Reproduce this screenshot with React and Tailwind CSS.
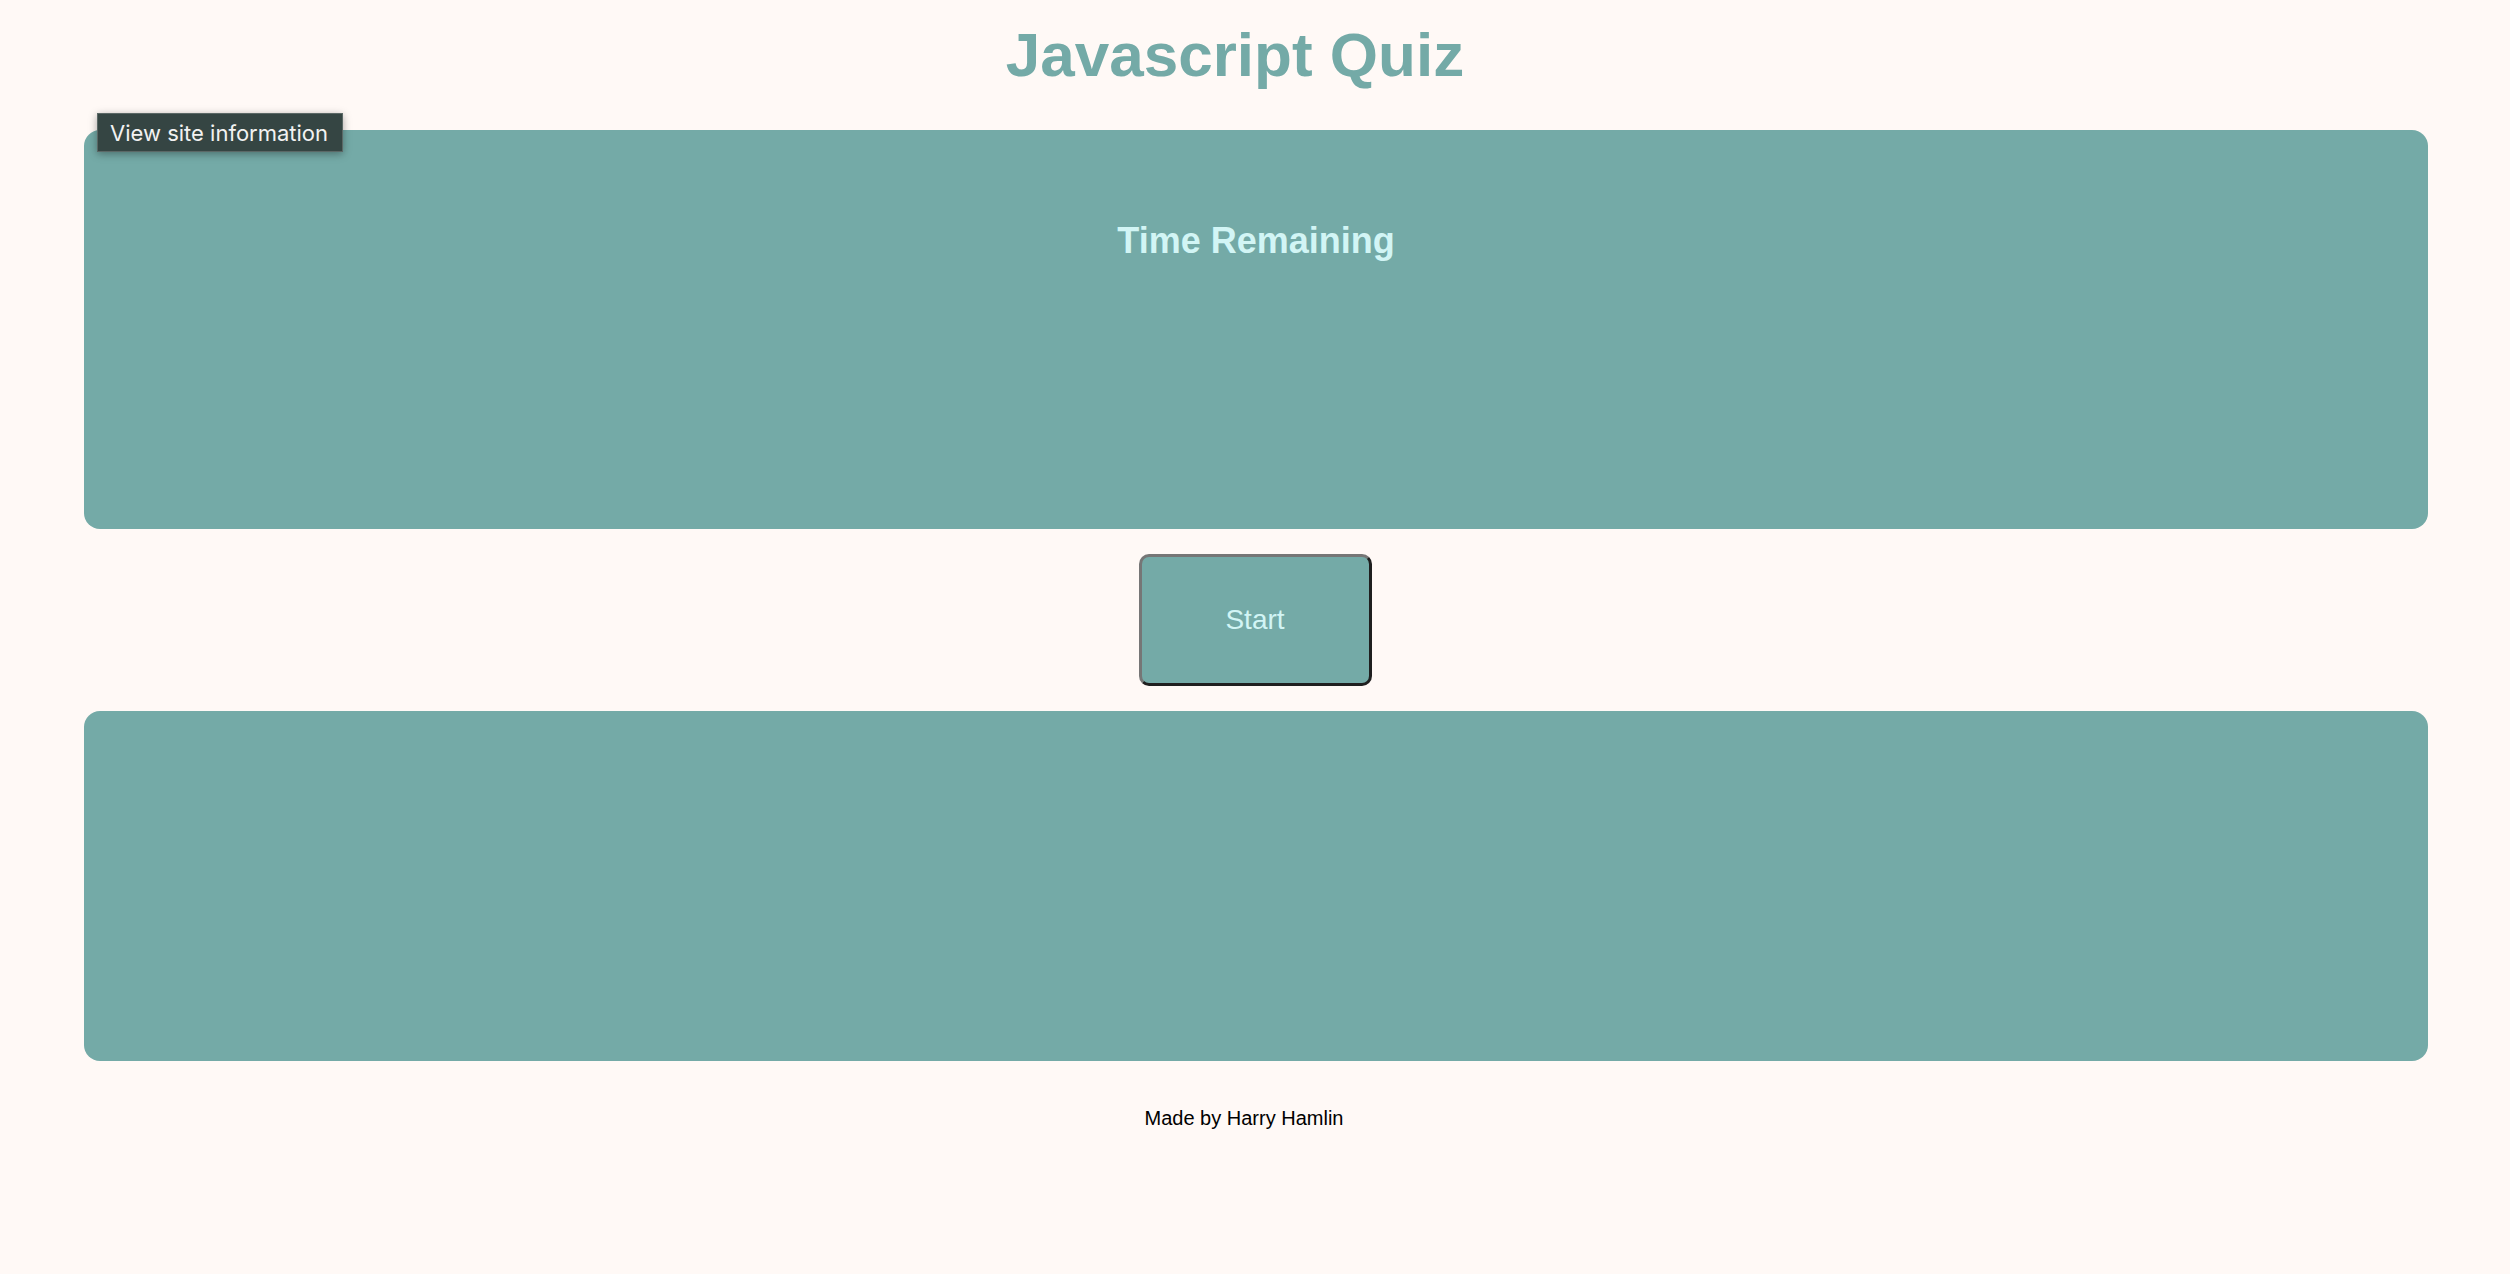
import React from "react";

export default function App() {
  return (
    <div
      className="relative min-h-screen w-full bg-[#fff9f6] pt-[19px] pb-[120px]"
      style={{ fontFamily: '"Liberation Sans", Arial, sans-serif' }}
    >
      <h1 className="h-[72px] pr-[40px] text-center text-[62px] font-bold leading-[72px] text-[#74aaa7]">
        Javascript Quiz
      </h1>

      <section className="mt-[39px] ml-[84px] mr-[82px] h-[399px] rounded-[16px] bg-[#74aaa7] pt-[89px]">
        <h2 className="text-center text-[36px] font-bold leading-[44px] text-[#d2f5f5]">
          Time Remaining
        </h2>
      </section>

      <div className="mt-[25px] flex justify-center">
        <button className="h-[132px] w-[233px] rounded-[10px] border-[3px] border-t-[#767676] border-l-[#767676] border-b-[#1f1f1f] border-r-[#1f1f1f] bg-[#74aaa7] text-[28px] text-[#d2f5f5]">
          Start
        </button>
      </div>

      <section className="mt-[25px] ml-[84px] mr-[82px] h-[350px] rounded-[16px] bg-[#74aaa7]" />

      <footer className="mt-[45px] pr-[22px] text-center text-[20px] leading-[24px] text-black">
        Made by Harry Hamlin
      </footer>

      <div
        className="absolute left-[97px] top-[113px] flex h-[39px] w-[246px] items-center border border-[#5b6866] bg-[#354543] pl-[12px] text-[22px] leading-none text-[#f2f2f2] shadow-[0_2px_8px_rgba(0,0,0,0.35)]"
        style={{ fontFamily: 'Inter, "Open Sans", sans-serif' }}
      >
        View site information
      </div>
    </div>
  );
}
